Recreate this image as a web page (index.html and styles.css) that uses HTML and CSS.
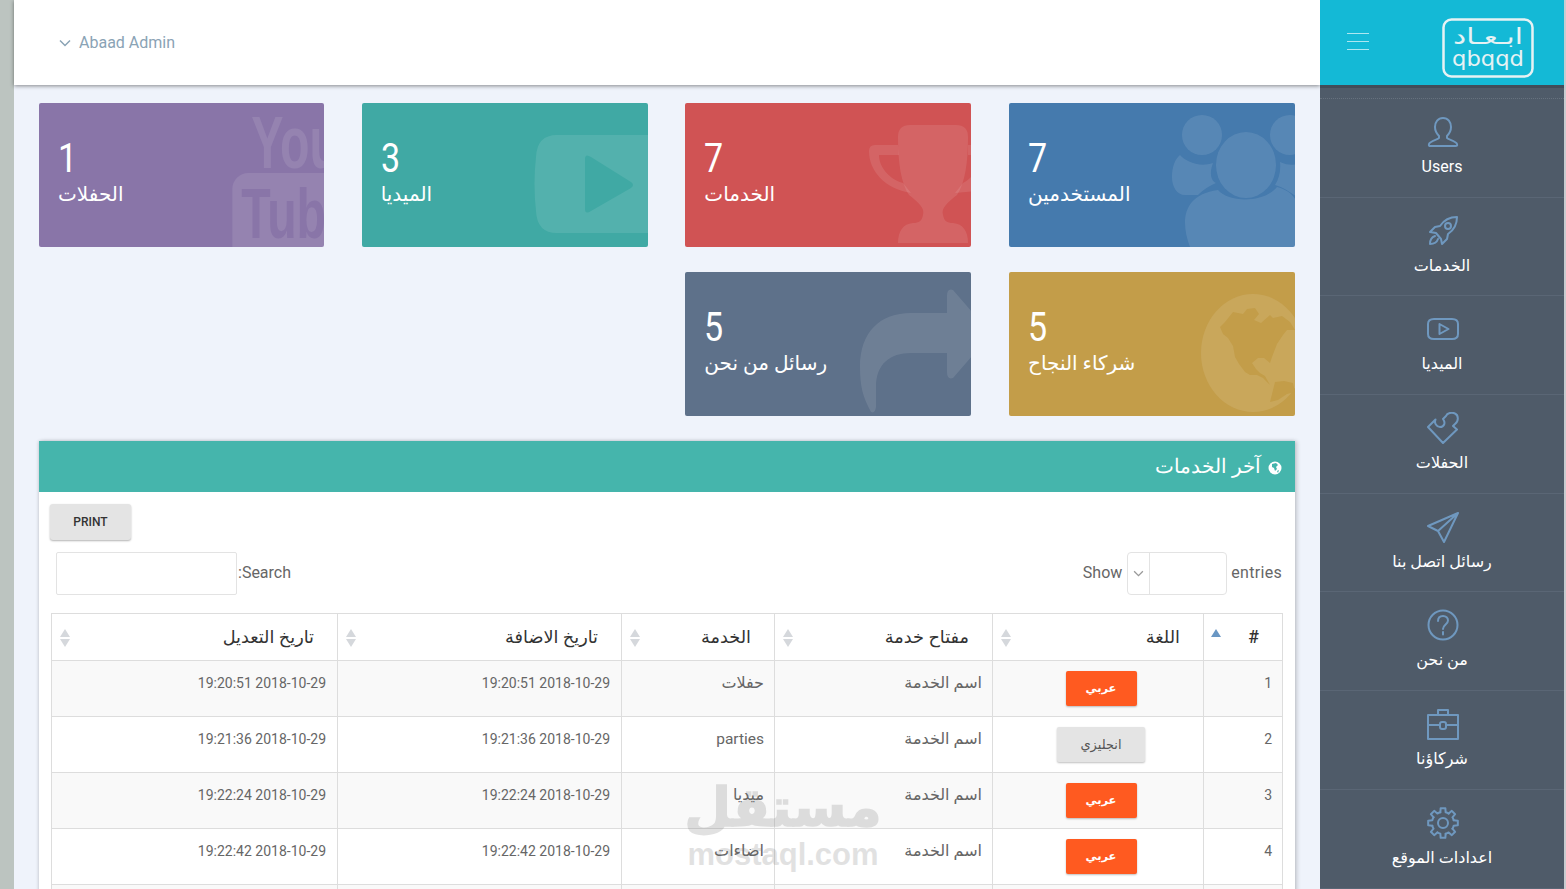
FILE: index.html
```html
<!DOCTYPE html>
<html lang="ar">
<head>
<meta charset="utf-8">
<title>Abaad Admin</title>
<link rel="stylesheet" href="styles.css">
</head>
<body>
<div class="strip"></div>
<main class="main">
  <header class="topbar">
    <svg class="chev" viewBox="0 0 12 8"><path d="M1 1.500l5 5 5-5"/></svg>
    <span class="admin">Abaad Admin</span>
  </header>
  <div class="content">
    <section class="cards">
      <article class="card blue">
        <svg class="bigicon" viewBox="0 0 286 144"><g class="ghost"><ellipse cx="237" cy="62" rx="30" ry="33"/><circle cx="193" cy="32" r="20"/><circle cx="281" cy="32" r="20"/><path d="M181 144C172 120 172 92 209 87C220 100 255 100 268 84C280 87 290 95 290 110V144Z"/><path d="M171 52C176 58 190 65 204 60C200 70 202 78 207 80C198 84 193 88 189 92H176C168 92 163 84 163 74C163 64 166 56 171 52Z"/><path d="M271 59C280 63 286 62 290 60V95C282 90 276 85 266 82C270 76 272 68 271 59Z"/></g></svg>
        <div class="num">7</div><div class="lbl">المستخدمين</div>
      </article>
      <article class="card red">
        <svg class="bigicon" viewBox="0 0 286 144"><g class="ghost"><path d="M213 34Q213 22 225 22H271Q283 22 283 34C283 60 280 80 272 92C262 100 256 105 258 112C259 118 262 120 268 120C278 121 283 128 283 140H213C213 128 218 121 228 120C234 120 237 118 238 112C240 105 234 100 224 92C216 80 213 60 213 34Z"/><path d="M213 42H190Q184 42 184 48C184 68 200 86 226 90L218 80C204 76 194 64 194 52H214Z"/><path d="M283 42H290V88L270 90L278 80C282 78 284 76 286 74V52H283Z"/></g></svg>
        <div class="num">7</div><div class="lbl">الخدمات</div>
      </article>
      <article class="card teal">
        <svg class="bigicon" viewBox="0 0 286 144"><path class="ghost" d="M195 32H290V130H195Q175 130 174 108Q171 81 174 54Q175 32 195 32Z"/><path class="cut-teal" d="M223 56Q223 50 229 54L269 79Q273 82 269 85L229 108Q223 112 223 106Z"/></svg>
        <div class="num">3</div><div class="lbl">الميديا</div>
      </article>
      <article class="card purple">
        <svg class="bigicon" viewBox="0 0 286 144"><g class="ghost"><text class="yt-top" x="213" y="65" textLength="88" lengthAdjust="spacingAndGlyphs">You</text><rect x="194" y="70" width="110" height="90" rx="16"/></g><text class="yt-bottom cut-purple" x="203" y="135" textLength="112" lengthAdjust="spacingAndGlyphs">Tube</text></svg>
        <div class="num">1</div><div class="lbl">الحفلات</div>
      </article>
      <article class="card gold">
        <svg class="bigicon" viewBox="0 0 286 144"><ellipse class="ghost" cx="244" cy="81" rx="52" ry="59"/><polygon class="cut-gold" points="211,55 216,50 224,40 234,42 238,37 246,36 250,42 245,48 252,51 261,43 264,46 273,44 281,50 286,58 278,58 274,63 268,72 263,85 261,91 255,86 249,86 243,91 247,97 251,101 256,104 261,113 254,106 248,103 241,103 236,100 230,92 226,85 224,74 219,66 214,62"/><polygon class="cut-gold" points="266,110 275,109 284,111 286,120 278,122 269,128 261,130 264,118"/></svg>
        <div class="num">5</div><div class="lbl">شركاء النجاح</div>
      </article>
      <article class="card slate">
        <svg class="bigicon" viewBox="0 0 286 144"><path class="ghost" d="M262 24Q262 16 268 18L306 62L268 106Q262 108 262 100V81H226C205 81 191 92 191 115V135Q190 142 186 140C178 125 175 115 175 95C175 60 195 41 226 41H262Z"/></svg>
        <div class="num">5</div><div class="lbl">رسائل من نحن</div>
      </article>
    </section>

    <section class="panel">
      <h2 class="panel-head">
        <svg class="globe" viewBox="0 0 14 14"><circle cx="7" cy="7" r="6.500"/><path class="globe-land" d="M4 3l4-1 2 2-2 2 1 2-2 2-1-3-2-1zM9 10l2-1-1 3z"/></svg>
        <span>آخر الخدمات</span>
      </h2>
      <div class="panel-body">
        <div class="print-row"><button class="print" type="button">PRINT</button></div>
        <div class="filters">
          <div class="search"><input class="search-input" type="text" aria-label="Search"><label>:Search</label></div>
          <div class="length">
            <span>Show</span>
            <div class="select"><span class="select-arrow"><svg viewBox="0 0 12 8"><path d="M1 1.500l5 5 5-5"/></svg></span></div>
            <span class="entries">entries</span>
          </div>
        </div>
        <table class="grid">
          <colgroup><col class="c1"><col class="c2"><col class="c3"><col class="c4"><col class="c5"><col class="c6"></colgroup>
          <thead>
            <tr>
              <th class="sort-active">#</th>
              <th class="sortable">اللغة</th>
              <th class="sortable">مفتاح خدمة</th>
              <th class="sortable">الخدمة</th>
              <th class="sortable">تاريخ الاضافة</th>
              <th class="sortable">تاريخ التعديل</th>
            </tr>
          </thead>
          <tbody>
            <tr><td>1</td><td class="btn-cell"><a class="lang ar">عربي</a></td><td class="tx">اسم الخدمة</td><td class="tx">حفلات</td><td class="date">2018-10-29 19:20:51</td><td class="date">2018-10-29 19:20:51</td></tr>
            <tr><td>2</td><td class="btn-cell"><a class="lang en">انجليزي</a></td><td class="tx">اسم الخدمة</td><td class="latin">parties</td><td class="date">2018-10-29 19:21:36</td><td class="date">2018-10-29 19:21:36</td></tr>
            <tr><td>3</td><td class="btn-cell"><a class="lang ar">عربي</a></td><td class="tx">اسم الخدمة</td><td class="tx">ميديا</td><td class="date">2018-10-29 19:22:24</td><td class="date">2018-10-29 19:22:24</td></tr>
            <tr><td>4</td><td class="btn-cell"><a class="lang ar">عربي</a></td><td class="tx">اسم الخدمة</td><td class="tx">اضاءات</td><td class="date">2018-10-29 19:22:42</td><td class="date">2018-10-29 19:22:42</td></tr>
            <tr><td></td><td></td><td></td><td></td><td></td><td></td></tr>
          </tbody>
        </table>
      </div>
    </section>
  </div>
</main>

<aside class="side">
  <div class="brand">
    <div class="burger"><i></i><i></i><i></i></div>
    <svg class="logo" viewBox="0 0 92 60">
      <rect x="1.500" y="1.500" width="89" height="57" rx="8"/>
      <text class="logo-ar" x="46" y="26" textLength="70" lengthAdjust="spacingAndGlyphs">ابـعـاد</text>
      <text class="logo-en" x="46" y="48" textLength="72" lengthAdjust="spacingAndGlyphs">qbqqd</text>
    </svg>
  </div>
  <nav class="nav">
    <a class="item"><svg viewBox="0 0 32 32"><path d="M16 2c-5 0-8 4-8 9 0 4 2 7 4 9v2c-1 1.500-9 3-10 6-.4 1.500 0 2 1.500 2h25c1.500 0 2-.5 1.500-2-1-3-9-4.500-10-6v-2c2-2 4-5 4-9 0-5-3-9-8-9z"/></svg><span>Users</span></a>
    <a class="item"><svg viewBox="0 0 32 32"><path d="M30 2c-8 0-13 3-17 9l-5 1-5 5 6 1 5 6 1 5 5-5 1-5c6-4 9-10 9-17z"/><circle cx="21" cy="11" r="3"/><path d="M8 21c-3 1-5 4-5 8 4 0 7-2 8-5"/></svg><span>الخدمات</span></a>
    <a class="item"><svg viewBox="0 0 32 32"><path d="M7 6h18c4 0 6 2 6 5v10c0 3-2 5-6 5H7c-4 0-6-2-6-5V11c0-3 2-5 6-5z"/><path d="M12.500 11l9 5-9 5z"/></svg><span>الميديا</span></a>
    <a class="item"><svg viewBox="0 0 32 32"><path d="M1 15L8.500 7.500C7 11 9.500 15 13 15C17 15 19 11 16 7L19 4C20 1 25 0 28 1.500C31.500 3 32 9 28 12L26 14L30 17.500L16 31Z"/></svg><span>الحفلات</span></a>
    <a class="item"><svg viewBox="0 0 32 32"><path d="M31 2L1 15l10 5 6 11zM31 2L11 20M31 2L17 31"/></svg><span>رسائل اتصل بنا</span></a>
    <a class="item"><svg viewBox="0 0 32 32"><circle cx="16" cy="16" r="14.500"/><path d="M11 12c0-3 2-5 5-5s5 2 5 4.500c0 4-5 4-5 8.500"/><path d="M16 23v2.500"/></svg><span>من نحن</span></a>
    <a class="item"><svg viewBox="0 0 32 32"><path d="M1 7h30v24H1zM11 7V2h10v5M1 17h12M19 17h12"/><rect x="13" y="14" width="6" height="7" rx="2"/></svg><span>شركاؤنا</span></a>
    <a class="item"><svg viewBox="0 0 32 32"><g><path d="M13.340 5.330L13.650 1.180H18.350L18.660 5.330A11 11 0 0 1 21.670 6.570"/><path transform="rotate(45 16 16)" d="M13.340 5.330L13.650 1.180H18.350L18.660 5.330A11 11 0 0 1 21.670 6.570"/><path transform="rotate(90 16 16)" d="M13.340 5.330L13.650 1.180H18.350L18.660 5.330A11 11 0 0 1 21.670 6.570"/><path transform="rotate(135 16 16)" d="M13.340 5.330L13.650 1.180H18.350L18.660 5.330A11 11 0 0 1 21.670 6.570"/><path transform="rotate(180 16 16)" d="M13.340 5.330L13.650 1.180H18.350L18.660 5.330A11 11 0 0 1 21.670 6.570"/><path transform="rotate(225 16 16)" d="M13.340 5.330L13.650 1.180H18.350L18.660 5.330A11 11 0 0 1 21.670 6.570"/><path transform="rotate(270 16 16)" d="M13.340 5.330L13.650 1.180H18.350L18.660 5.330A11 11 0 0 1 21.670 6.570"/><path transform="rotate(315 16 16)" d="M13.340 5.330L13.650 1.180H18.350L18.660 5.330A11 11 0 0 1 21.670 6.570"/></g><circle cx="16" cy="16" r="5"/></svg><span>اعدادات الموقع</span></a>
  </nav>
</aside>

<div class="watermark" aria-hidden="true"><div class="wm-ar">مستقل</div><div class="wm-en">mostaql.com</div></div>
</body>
</html>
```

FILE: styles.css
```css
* { box-sizing: border-box; }
html, body { height: 100%; }
body {
  margin: 0;
  display: flex;
  height: 100vh;
  overflow: hidden;
  background: #eff3fb;
  font-family: Roboto, "DejaVu Sans", sans-serif;
  color: #555;
  font-size: 14px;
}
.strip { width: 14px; flex: none; background: #bcc4c0; }
.main { flex: 1; min-width: 0; display: flex; flex-direction: column; }

.topbar {
  height: 85px;
  flex: none;
  background: #fff;
  box-shadow: 0 1px 4px rgba(0,0,0,.45);
  display: flex;
  align-items: center;
  padding-left: 45px;
  gap: 8px;
}
.chev { width: 12px; height: 8px; }
.chev path, .select-arrow path { fill: none; stroke: #8aa3b5; stroke-width: 1.500; }
.admin { font-size: 16px; color: #8aa3b5; }

.content { padding: 18px 25px 0; }
.cards {
  direction: rtl;
  display: grid;
  grid-template-columns: 286px 286px 286px 285px;
  gap: 25px 37.670px;
}
.card {
  direction: ltr;
  position: relative;
  height: 144px;
  border-radius: 2px;
  overflow: hidden;
  color: #fff;
  padding: 32px 19px 0;
}
.blue { background: #457aad; }
.red { background: #d05354; }
.teal { background: #40a9a4; }
.purple { background: #8975a8; }
.gold { background: #c39d49; }
.slate { background: #5e718a; }
.bigicon { position: absolute; inset: 0; width: 100%; height: 100%; }
.ghost { fill: rgba(255,255,255,.1); }
.cut-teal { fill: #40a9a4; }
.cut-purple { fill: #8975a8; }
.cut-gold { fill: #c39d49; }
.yt-top, .yt-bottom { font-family: "Liberation Sans", sans-serif; font-weight: 700; }
.yt-top { font-size: 74px; }
.yt-bottom { font-size: 70px; }
.num {
  position: relative;
  font-size: 40px;
  line-height: 48px;
  transform: scaleX(.85);
  transform-origin: left center;
}
.lbl { position: relative; font-size: 20px; line-height: 26px; margin-top: -2px; }

.panel {
  margin-top: 25px;
  background: #fff;
  box-shadow: 2px 0 4px rgba(0,0,0,.18), -1px 0 3px rgba(0,0,0,.12);
  direction: rtl;
}
.panel-head {
  margin: 0;
  height: 51px;
  background: #45b5ac;
  color: #fff;
  font-size: 19.800px;
  font-weight: 300;
  display: flex;
  align-items: center;
  gap: 7px;
  padding: 0 13px;
}
.globe { width: 14px; height: 14px; margin-top: 2px; }
.globe circle { fill: #fff; }
.globe-land { fill: #45b5ac; }
.panel-body { padding: 12px 12px 0 13px; }
.print-row { direction: ltr; margin-left: -2px; }
.print {
  width: 81px;
  height: 36px;
  border: 0;
  border-radius: 3px;
  background: #e4e4e4;
  box-shadow: 0 1px 2px rgba(0,0,0,.3);
  color: #333;
  font: 500 12px Roboto, sans-serif;
}
.filters {
  direction: ltr;
  margin: 12px 1px 0 0;
  height: 43px;
  display: flex;
  justify-content: space-between;
  padding-left: 4px;
  font-size: 16px;
  color: #666;
}
.search, .length { display: flex; align-items: center; }
.search label, .length > span { margin-bottom: 3px; }
.search-input {
  width: 181px;
  height: 43px;
  border: 1px solid #e3e3e3;
  border-radius: 2px;
  background: #fff;
  margin-right: 1px;
}
.length { gap: 4.500px; }
.entries { letter-spacing: .3px; }
.select {
  width: 100px;
  height: 43px;
  border: 1px solid #e3e3e3;
  border-radius: 4px;
  display: flex;
}
.select-arrow {
  width: 22px;
  border-right: 1px solid #e3e3e3;
  display: flex;
  align-items: center;
  justify-content: center;
}
.select-arrow svg { width: 11px; height: 7px; }
.select-arrow path { stroke: #999; }

.grid {
  width: 1231px;
  margin-top: 18px;
  border-collapse: collapse;
  table-layout: fixed;
  text-align: right;
}
.c1 { width: 79px; }
.c2 { width: 211px; }
.c3 { width: 218px; }
.c4 { width: 153px; }
.c5 { width: 284px; }
.c6 { width: 286px; }
th, td { border: 1px solid #ddd; }
th {
  position: relative;
  height: 47px;
  padding: 0 23px 0 0;
  font-size: 17.700px;
  font-weight: 500;
  color: #333;
}
td {
  height: 56px;
  padding: 11px 10px 0;
  vertical-align: top;
  font-size: 14px;
  line-height: 22px;
  color: #666;
}
.tx { font-size: 16px; }
.latin { font-size: 15.500px; }
.date { padding-right: 11px; }
tbody tr:nth-child(odd) { background: #f9f9f9; }
.sortable::before, .sortable::after {
  content: "";
  position: absolute;
  left: 8px;
  border: 5px solid transparent;
}
.sortable::before { top: 15px; border-bottom: 8px solid #d5d8dc; border-top-width: 0; }
.sortable::after { top: 25px; border-top: 8px solid #d5d8dc; border-bottom-width: 0; }
.sort-active::before {
  content: "";
  position: absolute;
  left: 7px;
  top: 15px;
  border: 5px solid transparent;
  border-top-width: 0;
  border-bottom: 8px solid #6a97c4;
}
.btn-cell { text-align: center; padding: 10px 0 0 6px; }
.lang {
  display: inline-block;
  height: 35px;
  line-height: 35px;
  border-radius: 2px;
  box-shadow: 0 1px 2px rgba(0,0,0,.25);
  text-align: center;
}
.ar { width: 71px; background: #ff5a20; color: #fff; font-weight: 700; font-size: 11.500px; }
.en { width: 88px; background: #e4e4e4; color: #555; font-size: 13px; }

.side {
  width: 246px;
  flex: none;
  background: #4f5b69;
  border-right: 2px solid #c8ccd0;
  display: flex;
  flex-direction: column;
}
.brand {
  height: 85px;
  flex: none;
  background: #14b9d6;
  display: flex;
  align-items: center;
  padding: 0 30px 0 27px;
  justify-content: space-between;
}
.burger { width: 22px; display: flex; flex-direction: column; gap: 7px; margin-top: -3px; }
.burger i { display: block; height: 1px; background: rgba(255,255,255,.65); }
.logo { width: 92px; height: 60px; margin-top: 11px; }
.logo rect { fill: none; stroke: #e6f2f4; stroke-width: 2.500; }
.logo-ar, .logo-en { fill: #e6f2f4; font-family: "DejaVu Sans", sans-serif; }
.logo-ar { font-size: 22px; text-anchor: middle; }
.logo-en { font-size: 21px; text-anchor: middle; }

.nav {
  background: linear-gradient(#414c59 0 3px, transparent 3px);
}
.nav::before {
  content: "";
  display: block;
  margin-top: 13px;
  border-top: 1px dotted #66717e;
}
.item {
  display: flex;
  flex-direction: column;
  align-items: center;
  height: 98.700px;
  padding-top: 17px;
  border-bottom: 1px solid #5a6675;
  color: #fff;
  font-size: 16px;
}
.item svg { width: 32px; height: 32px; display: block; margin-left: 2px; }
.item svg path, .item svg circle, .item svg rect {
  fill: none;
  stroke: #6f98bf;
  stroke-width: 2;
  stroke-linejoin: round;
  stroke-linecap: round;
}
.item span { margin-top: 9px; line-height: 20px; }

.watermark {
  position: absolute;
  left: 663px;
  top: 775px;
  width: 240px;
  text-align: center;
  color: #6e6e6e;
  opacity: .2;
  font-weight: 700;
  pointer-events: none;
}
.wm-ar { font-family: "DejaVu Sans", sans-serif; font-size: 54px; line-height: 65px; -webkit-text-stroke: 1.500px #6e6e6e; }
.wm-en { font-family: "Liberation Sans", sans-serif; font-size: 31px; line-height: 30px; }
```
